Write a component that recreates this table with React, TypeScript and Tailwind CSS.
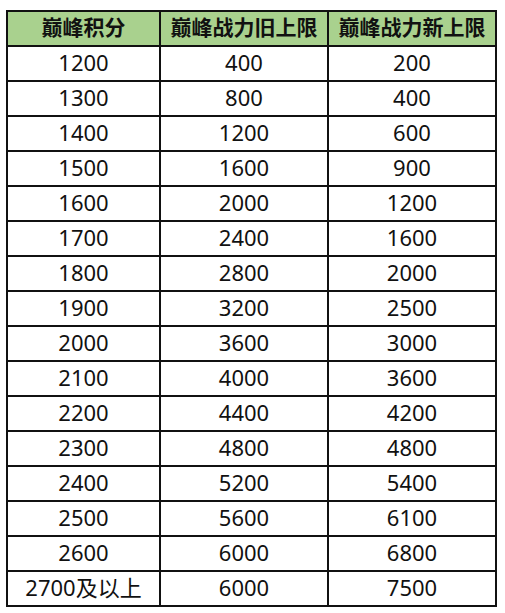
import React from 'react';

interface LimitRow {
  score: string;
  oldCap: string;
  newCap: string;
}

const rows: LimitRow[] = [
  { score: '1200', oldCap: '400', newCap: '200' },
  { score: '1300', oldCap: '800', newCap: '400' },
  { score: '1400', oldCap: '1200', newCap: '600' },
  { score: '1500', oldCap: '1600', newCap: '900' },
  { score: '1600', oldCap: '2000', newCap: '1200' },
  { score: '1700', oldCap: '2400', newCap: '1600' },
  { score: '1800', oldCap: '2800', newCap: '2000' },
  { score: '1900', oldCap: '3200', newCap: '2500' },
  { score: '2000', oldCap: '3600', newCap: '3000' },
  { score: '2100', oldCap: '4000', newCap: '3600' },
  { score: '2200', oldCap: '4400', newCap: '4200' },
  { score: '2300', oldCap: '4800', newCap: '4800' },
  { score: '2400', oldCap: '5200', newCap: '5400' },
  { score: '2500', oldCap: '5600', newCap: '6100' },
  { score: '2600', oldCap: '6000', newCap: '6800' },
  { score: '2700及以上', oldCap: '6000', newCap: '7500' },
];

const headers = ['巅峰积分', '巅峰战力旧上限', '巅峰战力新上限'];

const cell = 'h-[35px] flex items-center justify-center border-r-2 border-b-2 border-[#111]';

const App: React.FC = () => {
  return (
    <div className="w-[505px] h-[613px] bg-white pt-[10px] pl-[6px] font-['Noto_Sans','Noto_Sans_CJK_SC',sans-serif] text-[#111]">
      <div className="grid grid-cols-[153px_168px_168px] w-[491px] border-l-2 border-t-2 border-[#111]">
        {headers.map((h) => (
          <div key={h} className={`${cell} bg-[#a9d18e] font-bold text-[21px] pb-[2px]`}>
            {h}
          </div>
        ))}
        {rows.map((r) => (
          <React.Fragment key={r.score}>
            <div className={`${cell} text-[22px] pb-[3px]`}>{r.score}</div>
            <div className={`${cell} text-[22px] pb-[3px]`}>{r.oldCap}</div>
            <div className={`${cell} text-[22px] pb-[3px]`}>{r.newCap}</div>
          </React.Fragment>
        ))}
      </div>
    </div>
  );
};

export default App;
